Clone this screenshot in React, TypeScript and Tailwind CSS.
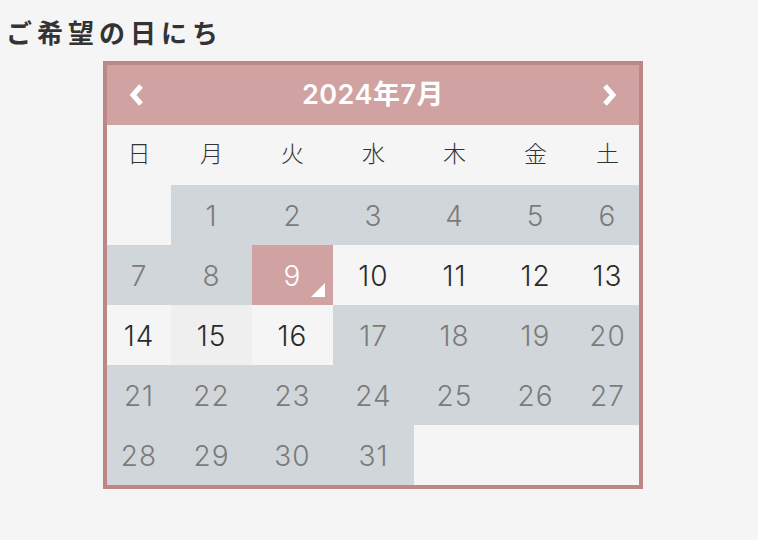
import React from "react";

const font = { fontFamily: '"Noto Sans CJK JP", "Noto Sans", sans-serif' };
const numFont = { fontFamily: 'Inter, "Noto Sans CJK JP", sans-serif' };

type Cell = { d?: number; kind: "empty" | "off" | "on" | "sel" | "hover" };

const rows: Cell[][] = [
  [{ kind: "empty" }, ...[1, 2, 3, 4, 5, 6].map((d) => ({ d, kind: "off" as const }))],
  [
    { d: 7, kind: "off" },
    { d: 8, kind: "off" },
    { d: 9, kind: "sel" },
    { d: 10, kind: "on" },
    { d: 11, kind: "on" },
    { d: 12, kind: "on" },
    { d: 13, kind: "on" },
  ],
  [
    { d: 14, kind: "on" },
    { d: 15, kind: "hover" },
    { d: 16, kind: "on" },
    ...[17, 18, 19, 20].map((d) => ({ d, kind: "off" as const })),
  ],
  [21, 22, 23, 24, 25, 26, 27].map((d) => ({ d, kind: "off" as const })),
  [
    ...[28, 29, 30, 31].map((d) => ({ d, kind: "off" as const })),
    { kind: "empty" },
    { kind: "empty" },
    { kind: "empty" },
  ],
];

const week = ["日", "月", "火", "水", "木", "金", "土"];

function cellClass(kind: Cell["kind"]) {
  switch (kind) {
    case "off":
      return "bg-[#d1d6da] text-[#7b7b7b]";
    case "on":
      return "bg-[#f5f5f5] text-[#2a2a2a]";
    case "hover":
      return "bg-[#efefef] text-[#2a2a2a]";
    case "sel":
      return "bg-[#d0a2a2] text-white relative";
    default:
      return "bg-[#f5f5f5]";
  }
}

function Chevron({ dir }: { dir: "left" | "right" }) {
  return (
    <svg width="18" height="24" viewBox="0 0 18 24">
      {dir === "left" ? (
        <polyline points="13,3 5,12 13,21" fill="none" stroke="white" strokeWidth="5" strokeLinejoin="miter" />
      ) : (
        <polyline points="5,3 13,12 5,21" fill="none" stroke="white" strokeWidth="5" strokeLinejoin="miter" />
      )}
    </svg>
  );
}

export default function App() {
  return (
    <div className="min-h-screen bg-[#f5f5f5] pt-[16px] pl-[6px]" style={font}>
      <h1 className="h-[32px] text-[26px] leading-[32px] font-bold tracking-[5px] text-[#333]">ご希望の日にち</h1>
      <div className="mt-[13px] ml-[97px] w-[540px] border-4 border-[#bd8785]">
        <div className="h-[60px] bg-[#d0a2a2] flex items-center justify-between px-[21px]">
          <Chevron dir="left" />
          <span className="text-white text-[27px] font-semibold tracking-[0.5px]" style={numFont}>2024年7月</span>
          <Chevron dir="right" />
        </div>
        <div className="grid grid-cols-[64px_81px_81px_81px_81px_81px_63px]">
          {week.map((w) => (
            <div key={w} className="h-[60px] flex items-center justify-center pb-[6px] text-[23px] text-[#333] bg-[#f5f5f5] font-light">
              {w}
            </div>
          ))}
          {rows.flat().map((c, i) => (
            <div
              key={i}
              className={`h-[60px] flex items-center justify-center pt-[2px] text-[28px] font-light tracking-[1px] ${cellClass(c.kind)}`}
              style={numFont}
            >
              {c.d}
              {c.kind === "sel" && (
                <span className="absolute right-[8px] bottom-[8px] w-0 h-0 border-l-[14px] border-l-transparent border-b-[14px] border-b-white" />
              )}
            </div>
          ))}
        </div>
      </div>
    </div>
  );
}
